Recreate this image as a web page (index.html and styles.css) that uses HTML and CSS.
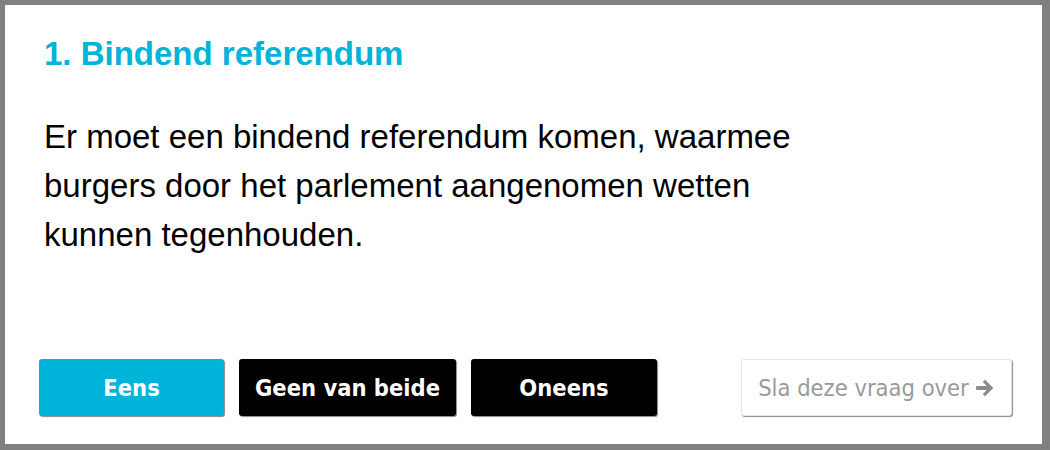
FILE: index.html
```html
<!DOCTYPE html>
<html lang="nl">
<head>
<meta charset="utf-8">
<link rel="stylesheet" href="styles.css">
</head>
<body>
<div class="frame">
  <div class="content">
    <h1 class="title">1. Bindend referendum</h1>
    <p class="statement">Er moet een bindend referendum komen, waarmee burgers door het parlement aangenomen wetten kunnen tegenhouden.</p>
  </div>
  <div class="actions">
    <button class="btn btn-agree">Eens</button>
    <button class="btn btn-dark btn-neutral">Geen van beide</button>
    <button class="btn btn-dark btn-disagree">Oneens</button>
    <button class="btn btn-skip">Sla deze vraag over <svg class="arrow" viewBox="0 0 18 16" width="20" height="18" aria-hidden="true"><path d="M1 6.2h9.5L7 2.7 9.1 0.6 16.5 8 9.1 15.4 7 13.3l3.5-3.5H1z" fill="#8c8c8c"/></svg></button>
  </div>
</div>
</body>
</html>
```
FILE: styles.css
```css
html, body {
  margin: 0;
  padding: 0;
  height: 100%;
}
body {
  background: #ffffff;
}
.frame {
  box-sizing: border-box;
  height: 450px;
  width: 1050px;
  border-style: solid;
  border-color: #808080;
  border-width: 5px 8px 6px 5px;
  display: flex;
  flex-direction: column;
  padding: 0 30px 28px 34px;
}
.content {
  padding: 0 5px;
}
.title {
  margin: 30px 0 0 0;
  font-family: "Liberation Sans", Arial, sans-serif;
  font-weight: bold;
  font-size: 33px;
  line-height: 38px;
  color: #00b3d9;
}
.statement {
  margin: 39px 0 0 0;
  width: 770px;
  font-family: "Liberation Sans", Arial, sans-serif;
  font-size: 33px;
  line-height: 49px;
  color: #000000;
}
.actions {
  margin-top: auto;
  display: flex;
  gap: 15px;
}
.btn {
  box-sizing: border-box;
  height: 57px;
  border: none;
  border-radius: 3px;
  font-family: "DejaVu Sans Condensed", "DejaVu Sans", sans-serif;
  font-size: 23.5px;
  cursor: pointer;
  padding: 0;
  display: flex;
  align-items: center;
  justify-content: center;
}
.btn-agree {
  width: 185px;
  background: #00b3d9;
  color: #ffffff;
  font-weight: bold;
  box-shadow: 1px 1px 1px #8a8a8a;
}
.btn-dark {
  background: #000000;
  color: #ffffff;
  font-weight: bold;
  box-shadow: 1px 1px 1px #8a8a8a;
}
.btn-neutral {
  width: 217px;
}
.btn-disagree {
  width: 186px;
}
.btn-skip {
  width: 271px;
  margin-left: auto;
  background: #ffffff;
  color: #9a9a9a;
  border: 1px solid #e4e4e4;
  box-shadow: 1px 1px 1px #8a8a8a;
  gap: 6px;
}
.arrow {
  display: block;
}
```
